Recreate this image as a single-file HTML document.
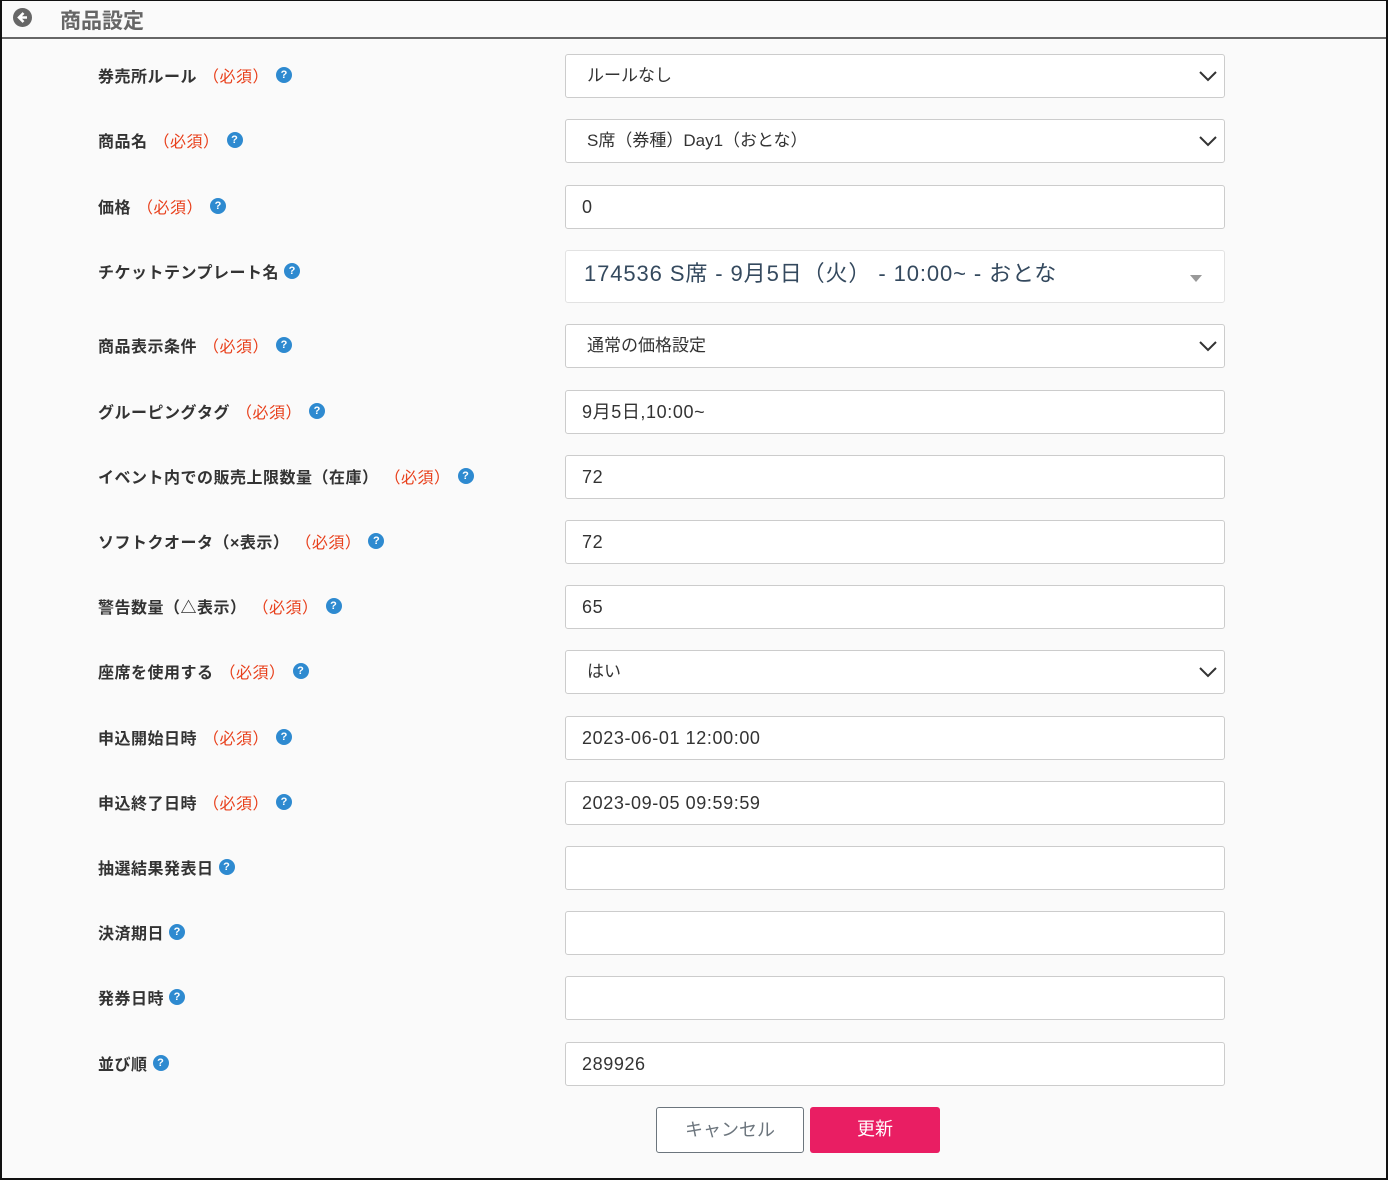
<!DOCTYPE html>
<html><head><meta charset="utf-8"><style>
*{box-sizing:border-box;margin:0;padding:0}
body{width:1388px;height:1180px;background:#fafafa;font-family:"Liberation Sans","Noto Sans CJK JP",sans-serif;position:relative;overflow:hidden}
.frame{position:absolute;left:0;top:0;width:1388px;height:1180px;border:2px solid #111;border-top:1px solid #111}
.hdr{position:absolute;left:2px;top:1px;width:1384px;height:38px;border-bottom:2px solid #666;background:#fafafa}
.hdr .t{position:absolute;left:58px;top:4px;font-size:21px;font-weight:bold;color:#666}
.back{position:absolute;left:11px;top:7px;width:19px;height:19px;border-radius:50%;background:#666}
.lab{position:absolute;left:98px;font-size:16px;letter-spacing:0.5px;font-weight:bold;color:#333;white-space:nowrap;display:flex;align-items:center;height:20px}
.req{color:#e8401c;font-weight:normal;margin-left:6px}
.q{display:inline-block;width:16px;height:16px;border-radius:50%;background:#2e8ad0;color:#fff;font-size:11px;letter-spacing:0;font-weight:bold;text-align:center;line-height:16px;margin-left:5px}
.req+.q{margin-left:7px}
.in{position:absolute;left:565px;width:660px;height:44px;background:#fff;border:1px solid #ccc;border-radius:3px;font-size:18px;letter-spacing:0.6px;color:#333;padding-left:16px;line-height:42px}
.sel{padding-left:21px;font-size:17px;letter-spacing:0}
.sel svg{position:absolute;right:6px;top:14px}
.btn{position:absolute;top:1107px;height:46px;border-radius:3px;font-size:18px;text-align:center;line-height:44px}
</style></head><body>
<div class="hdr"><div class="back"><svg width="19" height="19" viewBox="0 0 19 19"><path d="M10.5 5 L6 9.5 L10.5 14 M6.5 9.5 H14" stroke="#fff" stroke-width="2.6" fill="none"/></svg></div><div class="t">商品設定</div></div>

<div class="lab" style="top:65px">券売所ルール<span class="req">（必須）</span><span class="q">?</span></div>
<div class="in sel" style="top:54px">ルールなし<svg width="20" height="14"><path d="M2 3 L10 11 L18 3" stroke="#333" stroke-width="2" fill="none"/></svg></div>

<div class="lab" style="top:130px">商品名<span class="req">（必須）</span><span class="q">?</span></div>
<div class="in sel" style="top:119px">S席（券種）Day1（おとな）<svg width="20" height="14"><path d="M2 3 L10 11 L18 3" stroke="#333" stroke-width="2" fill="none"/></svg></div>

<div class="lab" style="top:196px">価格<span class="req">（必須）</span><span class="q">?</span></div>
<div class="in" style="top:185px">0</div>

<div class="lab" style="top:261px">チケットテンプレート名<span class="q">?</span></div>
<div class="in" style="top:250px;height:53px;line-height:46px;border-color:#e2e2e2;font-size:22px;letter-spacing:0.9px;color:#34495e;padding-left:18px">174536 S席 - 9月5日（火） - 10:00~ - おとな<svg style="position:absolute;right:22px;top:24px" width="12" height="7"><path d="M0 0 H12 L6 7Z" fill="#999"/></svg></div>

<div class="lab" style="top:335px">商品表示条件<span class="req">（必須）</span><span class="q">?</span></div>
<div class="in sel" style="top:324px">通常の価格設定<svg width="20" height="14"><path d="M2 3 L10 11 L18 3" stroke="#333" stroke-width="2" fill="none"/></svg></div>

<div class="lab" style="top:401px">グルーピングタグ<span class="req">（必須）</span><span class="q">?</span></div>
<div class="in" style="top:390px">9月5日,10:00~</div>

<div class="lab" style="top:466px">イベント内での販売上限数量（在庫）<span class="req">（必須）</span><span class="q">?</span></div>
<div class="in" style="top:455px">72</div>

<div class="lab" style="top:531px">ソフトクオータ（×表示）<span class="req">（必須）</span><span class="q">?</span></div>
<div class="in" style="top:520px">72</div>

<div class="lab" style="top:596px">警告数量（△表示）<span class="req">（必須）</span><span class="q">?</span></div>
<div class="in" style="top:585px">65</div>

<div class="lab" style="top:661px">座席を使用する<span class="req">（必須）</span><span class="q">?</span></div>
<div class="in sel" style="top:650px">はい<svg width="20" height="14"><path d="M2 3 L10 11 L18 3" stroke="#333" stroke-width="2" fill="none"/></svg></div>

<div class="lab" style="top:727px">申込開始日時<span class="req">（必須）</span><span class="q">?</span></div>
<div class="in" style="top:716px">2023-06-01 12:00:00</div>

<div class="lab" style="top:792px">申込終了日時<span class="req">（必須）</span><span class="q">?</span></div>
<div class="in" style="top:781px">2023-09-05 09:59:59</div>

<div class="lab" style="top:857px">抽選結果発表日<span class="q">?</span></div>
<div class="in" style="top:846px"></div>

<div class="lab" style="top:922px">決済期日<span class="q">?</span></div>
<div class="in" style="top:911px"></div>

<div class="lab" style="top:987px">発券日時<span class="q">?</span></div>
<div class="in" style="top:976px"></div>

<div class="lab" style="top:1053px">並び順<span class="q">?</span></div>
<div class="in" style="top:1042px">289926</div>

<div class="btn" style="left:656px;width:148px;border:1px solid #6c757d;color:#6c757d;background:#fff">キャンセル</div>
<div class="btn" style="left:810px;width:130px;background:#e91e63;color:#fff">更新</div>
<div class="frame"></div>
</body></html>
